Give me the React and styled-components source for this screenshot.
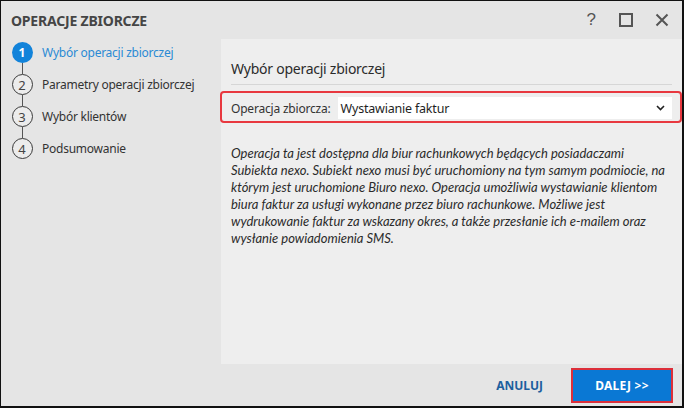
import React from "react";
import styled, { createGlobalStyle } from "styled-components";

const GlobalStyle = createGlobalStyle`
  html, body {
    margin: 0;
    padding: 0;
    background: #ffffff;
  }
  * {
    box-sizing: border-box;
  }
`;

const steps = [
  { n: 1, label: "Wybór operacji zbiorczej" },
  { n: 2, label: "Parametry operacji zbiorczej" },
  { n: 3, label: "Wybór klientów" },
  { n: 4, label: "Podsumowanie" },
];

const description =
  "Operacja ta jest dostępna dla biur rachunkowych będących posiadaczami Subiekta nexo. Subiekt nexo musi być uruchomiony na tym samym podmiocie, na którym jest uruchomione Biuro nexo. Operacja umożliwia wystawianie klientom biura faktur za usługi wykonane przez biuro rachunkowe. Możliwe jest wydrukowanie faktur za wskazany okres, a także przesłanie ich e-mailem oraz wysłanie powiadomienia SMS.";

const App = () => {
  const active = 1;

  return (
    <>
      <GlobalStyle />
      <Window>
        <TitleBar>
          <Title>OPERACJE ZBIORCZE</Title>
          <WindowControls>
            <HelpIcon>?</HelpIcon>
            <svg width="16" height="16" viewBox="0 0 16 16">
              <rect x="2" y="2" width="12" height="12" fill="none" stroke="#555" strokeWidth="2" />
            </svg>
            <svg width="16" height="16" viewBox="0 0 16 16">
              <path d="M2.5 2.5 L13.5 13.5 M13.5 2.5 L2.5 13.5" stroke="#555" strokeWidth="2" />
            </svg>
          </WindowControls>
        </TitleBar>

        <Body>
          <Sidebar>
            {steps.map((s, i) => (
              <Step key={s.n}>
                <Marker>
                  <Circle $active={s.n === active}>{s.n}</Circle>
                  {i < steps.length - 1 && <Connector />}
                </Marker>
                <StepLabel $active={s.n === active}>{s.label}</StepLabel>
              </Step>
            ))}
          </Sidebar>

          <Panel>
            <Heading>Wybór operacji zbiorczej</Heading>

            <Highlight>
              <FieldLabel>Operacja zbiorcza:</FieldLabel>
              <Select>
                <span>Wystawianie faktur</span>
                <svg width="9" height="6" viewBox="0 0 9 6">
                  <path d="M1 1 L4.5 4.5 L8 1" fill="none" stroke="#222" strokeWidth="1.6" />
                </svg>
              </Select>
            </Highlight>

            <Description>{description}</Description>
          </Panel>
        </Body>

        <Footer>
          <CancelBtn>ANULUJ</CancelBtn>
          <NextBtn>DALEJ &gt;&gt;</NextBtn>
        </Footer>
      </Window>
    </>
  );
};

export default App;

/* ================== STYLES ================== */
const Window = styled.div`
  width: 684px;
  height: 408px;
  display: flex;
  flex-direction: column;
  background: #e5e5e5;
  border-top: 1px solid #111;
  border-left: 1px solid #111;
  border-right: 2px solid #111;
  border-bottom: 2px solid #111;
  font-family: "Noto Sans", "Open Sans", sans-serif;
  color: #333;
`;

const TitleBar = styled.div`
  height: 38px;
  flex: 0 0 38px;
  display: flex;
  align-items: center;
  justify-content: space-between;
  padding: 0 10px 0 10px;
`;

const Title = styled.div`
  font-size: 14px;
  font-weight: 700;
  color: #454545;
  letter-spacing: -0.2px;
`;

const WindowControls = styled.div`
  display: flex;
  align-items: center;
  gap: 20px;
  padding-right: 2px;
`;

const HelpIcon = styled.span`
  font-family: "Liberation Sans", sans-serif;
  font-size: 17px;
  color: #555;
  line-height: 16px;
  margin-right: 2px;
`;

const Body = styled.div`
  flex: 0 0 325px;
  display: flex;
`;

const Sidebar = styled.div`
  width: 220px;
  flex: 0 0 220px;
  padding: 3px 0 0 10px;
  display: flex;
  flex-direction: column;
`;

const Step = styled.div`
  display: flex;
  align-items: flex-start;
  gap: 9px;
`;

const Marker = styled.div`
  display: flex;
  flex-direction: column;
  align-items: center;
  width: 22px;
`;

const Circle = styled.div`
  width: 21px;
  height: 21px;
  border-radius: 50%;
  display: flex;
  align-items: center;
  justify-content: center;
  font-size: ${(p) => (p.$active ? "12px" : "13px")};
  font-weight: ${(p) => (p.$active ? 700 : 400)};
  color: ${(p) => (p.$active ? "#ffffff" : "#444")};
  background: ${(p) => (p.$active ? "#1283da" : "#ececec")};
  border: ${(p) => (p.$active ? "none" : "1.5px solid #3a3a3a")};
`;

const Connector = styled.div`
  width: 1px;
  height: 11px;
  background: #555;
`;

const StepLabel = styled.div`
  font-size: 12px;
  line-height: 21px;
  letter-spacing: -0.25px;
  color: ${(p) => (p.$active ? "#2a8ad4" : "#333")};
`;

const Panel = styled.div`
  flex: 1;
  background: #eeeeee;
  padding: 20px 10px 0 10px;
  display: flex;
  flex-direction: column;
`;

const Heading = styled.div`
  font-size: 14px;
  line-height: 20px;
  letter-spacing: -0.25px;
  color: #2b2b2b;
  padding-bottom: 5px;
  border-bottom: 1px solid #d6d6d6;
`;

const Highlight = styled.div`
  display: flex;
  align-items: center;
  gap: 7px;
  margin: 6px -10px 0 -11px;
  padding: 4px 8px 2px 9px;
  border: 2px solid #e8383f;
  border-radius: 4px;
`;

const FieldLabel = styled.div`
  font-size: 12px;
  letter-spacing: -0.2px;
  color: #333;
  white-space: nowrap;
`;

const Select = styled.div`
  flex: 1;
  height: 22px;
  background: #ffffff;
  display: flex;
  align-items: center;
  justify-content: space-between;
  padding: 0 7px 0 3px;
  font-size: 12.5px;
  letter-spacing: -0.2px;
  color: #1f1f1f;
`;

const Description = styled.p`
  margin: 22px 0 0 0;
  font-family: Lato, "Open Sans", sans-serif;
  font-style: italic;
  font-size: 13px;
  line-height: 17px;
  color: #2b2b2b;
  max-width: 440px;
`;

const Footer = styled.div`
  flex: 1;
  display: flex;
  align-items: center;
  justify-content: flex-end;
  gap: 14px;
  padding-right: 9px;
`;

const CancelBtn = styled.button`
  background: transparent;
  border: none;
  font-family: "Noto Sans", sans-serif;
  font-weight: 700;
  font-size: 12px;
  color: #1d5f9e;
  padding: 0 14px;
  cursor: pointer;
`;

const NextBtn = styled.button`
  width: 102px;
  height: 35px;
  background: #0a78d4;
  border: 2px solid #dc2f3a;
  font-family: "Noto Sans", sans-serif;
  font-weight: 700;
  font-size: 12px;
  color: #ffffff;
  cursor: pointer;
  letter-spacing: 0.2px;
`;
